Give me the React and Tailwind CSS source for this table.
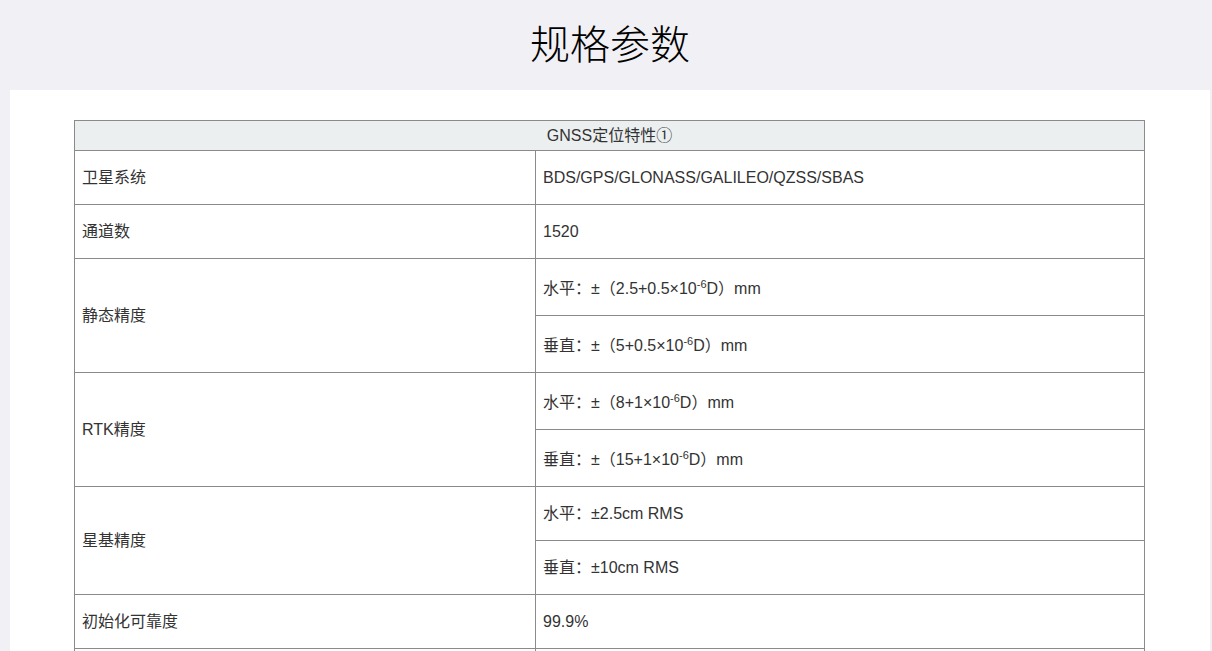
import React from 'react';

const Sup = ({ children }) => <sup className="text-[11px] relative -top-[6px] align-baseline">{children}</sup>;

const cell = 'border border-[#8a8a8a] px-[7px] align-middle';

const App = () => {
  return (
    <div className="min-h-screen bg-[#f1f0f5] font-['Liberation_Sans','Noto_Sans_CJK_SC',sans-serif] text-[#333]">
      <div className="ml-[10px] w-[1200px]">
        {/* Title */}
        <div className="h-[90px] flex items-center justify-center pb-[6px]">
          <h1 className="text-[40px] leading-none text-black font-['Noto_Sans_CJK_SC',sans-serif] font-light">规格参数</h1>
        </div>

        {/* Spec panel */}
        <div className="bg-white pt-[30px] pb-10 pl-[64px]">
          <table className="w-[1071px] border-collapse text-[16px] leading-[20px]">
            <colgroup>
              <col className="w-[461px]" />
              <col />
            </colgroup>
            <tbody>
              <tr className="h-[30px] bg-[#ebefef]">
                <td colSpan={2} className={cell + ' text-center'}>GNSS定位特性①</td>
              </tr>
              <tr className="h-[54px]">
                <td className={cell}>卫星系统</td>
                <td className={cell}>BDS/GPS/GLONASS/GALILEO/QZSS/SBAS</td>
              </tr>
              <tr className="h-[54px]">
                <td className={cell}>通道数</td>
                <td className={cell}>1520</td>
              </tr>
              <tr className="h-[57px]">
                <td rowSpan={2} className={cell}>静态精度</td>
                <td className={cell + ' pt-[3px]'}>水平：±（2.5+0.5×10<Sup>-6</Sup>D）mm</td>
              </tr>
              <tr className="h-[57px]">
                <td className={cell + ' pt-[3px]'}>垂直：±（5+0.5×10<Sup>-6</Sup>D）mm</td>
              </tr>
              <tr className="h-[57px]">
                <td rowSpan={2} className={cell}>RTK精度</td>
                <td className={cell + ' pt-[3px]'}>水平：±（8+1×10<Sup>-6</Sup>D）mm</td>
              </tr>
              <tr className="h-[57px]">
                <td className={cell + ' pt-[3px]'}>垂直：±（15+1×10<Sup>-6</Sup>D）mm</td>
              </tr>
              <tr className="h-[54px]">
                <td rowSpan={2} className={cell}>星基精度</td>
                <td className={cell}>水平：±2.5cm RMS</td>
              </tr>
              <tr className="h-[54px]">
                <td className={cell}>垂直：±10cm RMS</td>
              </tr>
              <tr className="h-[54px]">
                <td className={cell}>初始化可靠度</td>
                <td className={cell}>99.9%</td>
              </tr>
              <tr className="h-[54px]">
                <td className={cell}>初始化时间</td>
                <td className={cell}>&lt;10s</td>
              </tr>
            </tbody>
          </table>
        </div>
      </div>
    </div>
  );
};

export default App;
